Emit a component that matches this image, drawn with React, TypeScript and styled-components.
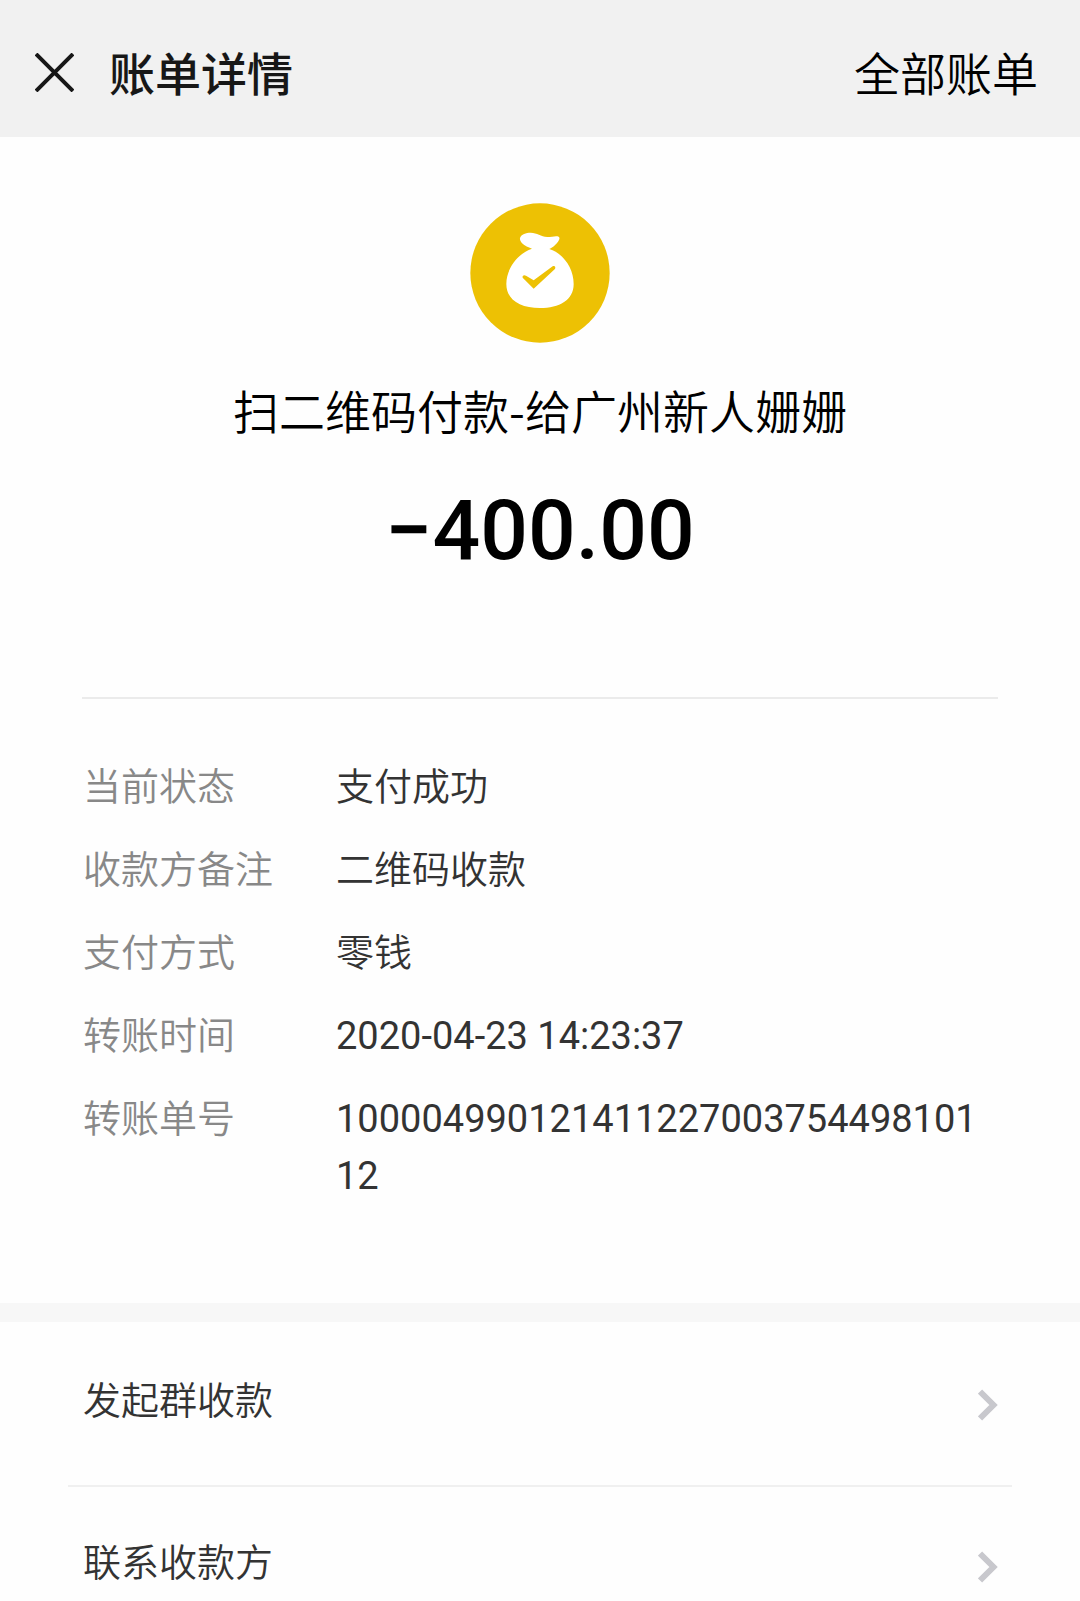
import React from "react";
import styled, { createGlobalStyle } from "styled-components";

const GlobalStyle = createGlobalStyle`
  *, *::before, *::after { box-sizing: border-box; }
  body {
    margin: 0;
    background: #fefefe;
    color: #333;
    font-family: Roboto, "Noto Sans CJK SC", sans-serif;
  }
`;

const Header = styled.header`
  display: flex;
  align-items: center;
  height: 137px;
  padding: 8px 42px 0 35px;
  background: #f1f1f1;
`;

const CloseButton = styled.button`
  display: flex;
  margin: 0 35px 0 0;
  padding: 0;
  border: 0;
  background: none;
  cursor: pointer;
`;

const Title = styled.h1`
  flex: 1;
  margin: 0;
  padding-top: 4px;
  color: #171717;
  font-size: 46px;
  font-weight: 500;
  line-height: 64px;
`;

const AllBillsLink = styled.a`
  padding-top: 4px;
  color: #000;
  font-size: 46px;
  font-weight: 350;
  line-height: 64px;
  text-decoration: none;
`;

const Summary = styled.section`
  display: flex;
  flex-direction: column;
  align-items: center;
  margin: 0 82px;
  padding: 66px 0 116px;
  border-bottom: 2px solid #ebebeb;
`;

const Payee = styled.h2`
  margin: 34px 0 40px;
  color: #000;
  font-family: "Noto Sans CJK SC", sans-serif;
  font-size: 46px;
  font-weight: 350;
  line-height: 64px;
`;

const Amount = styled.p`
  margin: 0;
  color: #000;
  font-size: 84px;
  font-weight: 500;
  line-height: 100px;
`;

const Details = styled.dl`
  display: grid;
  grid-template-columns: 253px 1fr;
  row-gap: 26px;
  margin: 0;
  padding: 60px 96px 98px 83px;
  font-size: 38px;
  font-weight: 350;
  line-height: 57px;
`;

const Term = styled.dt`
  color: #888;
`;

const Value = styled.dd<{ $numeric?: boolean }>`
  margin: 0;
  min-width: 0;
  font-weight: ${(p) => (p.$numeric ? 400 : 350)};
  word-break: break-all;
`;

const Actions = styled.nav`
  padding: 3px 68px 0;
  border-top: 19px solid #f7f7f7;
`;

const ActionLink = styled.a`
  display: flex;
  align-items: center;
  justify-content: space-between;
  padding: 48px 14px 55px 15px;
  border-bottom: 2px solid #f0f0f0;
  color: #333;
  font-size: 38px;
  font-weight: 350;
  line-height: 57px;
  text-decoration: none;

  &:last-child {
    padding-bottom: 9px;
    border-bottom: 0;
  }
`;

const ChevronIcon = styled.svg`
  margin-top: 6px;
`;

const MoneyBag = () => (
  <svg width="140" height="140" viewBox="0 0 420 420" aria-hidden="true">
    <circle cx="210" cy="210" r="209" fill="#edc104" />
    <path
      fill="#fff"
      d="M186 137C160 128 148 116 150 105C154 93 168 89 182 89C202 89 212 101 232 102C246 102 258 97 266 101C273 106 264 118 256 125C250 131 244 135 238 138C280 151 311 196 311 243C311 291 268 315 210 315C152 315 109 291 109 243C109 196 144 151 186 137Z"
    />
    <path
      fill="#edc104"
      d="M158 224C156 218 162 214 168 218L191 232L248 190C254 186 259 193 254 199L191 257Z"
    />
  </svg>
);

const Chevron = () => (
  <ChevronIcon width="20" height="32" viewBox="0 0 20 32" aria-hidden="true">
    <path d="M2 2.5L15.5 16L2 29.5" fill="none" stroke="#c8c8cd" strokeWidth="6" />
  </ChevronIcon>
);

const details = [
  { label: "当前状态", value: "支付成功" },
  { label: "收款方备注", value: "二维码收款" },
  { label: "支付方式", value: "零钱" },
  { label: "转账时间", value: "2020-04-23 14:23:37", numeric: true },
  { label: "转账单号", value: "10000499012141122700375449810112", numeric: true },
];

const actions = ["发起群收款", "联系收款方"];

export default function App() {
  return (
    <>
      <GlobalStyle />
      <Header>
        <CloseButton type="button" aria-label="关闭">
          <svg width="39" height="39" viewBox="0 0 39 39" aria-hidden="true">
            <path d="M1 1L38 38M38 1L1 38" stroke="#171717" strokeWidth="4" />
          </svg>
        </CloseButton>
        <Title>账单详情</Title>
        <AllBillsLink href="#bills">全部账单</AllBillsLink>
      </Header>
      <main>
        <Summary>
          <MoneyBag />
          <Payee>扫二维码付款-给广州新人姗姗</Payee>
          <Amount>−400.00</Amount>
        </Summary>
        <Details>
          {details.map((d) => (
            <React.Fragment key={d.label}>
              <Term>{d.label}</Term>
              <Value $numeric={d.numeric}>{d.value}</Value>
            </React.Fragment>
          ))}
        </Details>
        <Actions>
          {actions.map((label) => (
            <ActionLink key={label} href="#action">
              {label}
              <Chevron />
            </ActionLink>
          ))}
        </Actions>
      </main>
    </>
  );
}
